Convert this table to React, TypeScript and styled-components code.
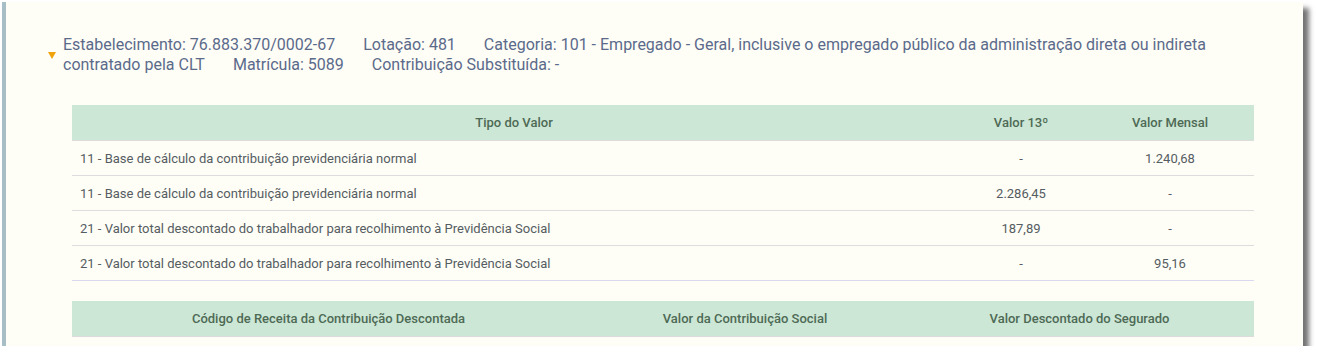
import React from "react";
import styled, { createGlobalStyle } from "styled-components";

const GlobalStyle = createGlobalStyle`
  body {
    margin: 0;
    background: #ffffff;
    font-family: Roboto, "Liberation Sans", sans-serif;
  }
`;

const Card = styled.div`
  box-sizing: border-box;
  margin: 2px 0 0 2px;
  width: 1301px;
  background: #fefef6;
  border-left: 4px solid #a8bec6;
  box-shadow: 6px 6px 5px rgba(0, 0, 0, 0.55);
  padding: 33px 49px 9px 0;
`;

const Summary = styled.div`
  display: flex;
  align-items: center;
  gap: 7px;
  padding-left: 42px;
  padding-right: 10px;
`;

const Caret = styled.span`
  flex: none;
  width: 0;
  height: 0;
  border-left: 4.5px solid transparent;
  border-right: 4.5px solid transparent;
  border-top: 7px solid #f0a30a;
`;

const Info = styled.div`
  font-size: 16px;
  line-height: 20px;
  color: #5b6a8b;
`;

const Field = styled.span`
  margin-right: 28px;
`;

const Table = styled.table<{ $top: number }>`
  border-collapse: collapse;
  width: 1182px;
  margin: ${(p) => p.$top}px 0 0 66px;
  table-layout: fixed;
  font-size: 13px;
`;

const Th = styled.th`
  background: #cce7d6;
  color: #4e6a55;
  font-weight: 500;
  height: 35px;
  padding: 0 8px;
  text-align: center;
  border-bottom: 1px solid #dcdcdc;
`;

const Td = styled.td<{ $center?: boolean; $last?: boolean }>`
  height: 34px;
  padding: 0 8px;
  color: #555c62;
  text-align: ${(p) => (p.$center ? "center" : "left")};
  border-bottom: 1px solid ${(p) => (p.$last ? "#d8d8ee" : "#dddddd")};
`;

const rows = [
  { tipo: "11 - Base de cálculo da contribuição previdenciária normal", v13: "-", mensal: "1.240,68" },
  { tipo: "11 - Base de cálculo da contribuição previdenciária normal", v13: "2.286,45", mensal: "-" },
  { tipo: "21 - Valor total descontado do trabalhador para recolhimento à Previdência Social", v13: "187,89", mensal: "-" },
  { tipo: "21 - Valor total descontado do trabalhador para recolhimento à Previdência Social", v13: "-", mensal: "95,16" },
];

export default function App() {
  return (
    <>
      <GlobalStyle />
      <Card>
        <Summary>
          <Caret />
          <Info>
            <Field>Estabelecimento: 76.883.370/0002-67</Field>
            <Field>Lotação: 481</Field>
            <Field>
              Categoria: 101 - Empregado - Geral, inclusive o empregado público da administração direta ou indireta
              contratado pela CLT
            </Field>
            <Field>Matrícula: 5089</Field>
            <span>Contribuição Substituída: -</span>
          </Info>
        </Summary>

        <Table $top={30}>
          <colgroup>
            <col style={{ width: 884 }} />
            <col style={{ width: 130 }} />
            <col style={{ width: 168 }} />
          </colgroup>
          <thead>
            <tr>
              <Th>Tipo do Valor</Th>
              <Th>Valor 13º</Th>
              <Th>Valor Mensal</Th>
            </tr>
          </thead>
          <tbody>
            {rows.map((r, i) => (
              <tr key={i}>
                <Td $last={i === rows.length - 1}>{r.tipo}</Td>
                <Td $center $last={i === rows.length - 1}>{r.v13}</Td>
                <Td $center $last={i === rows.length - 1}>{r.mensal}</Td>
              </tr>
            ))}
          </tbody>
        </Table>

        <Table $top={20}>
          <colgroup>
            <col style={{ width: 513 }} />
            <col style={{ width: 320 }} />
            <col style={{ width: 349 }} />
          </colgroup>
          <thead>
            <tr>
              <Th>Código de Receita da Contribuição Descontada</Th>
              <Th>Valor da Contribuição Social</Th>
              <Th>Valor Descontado do Segurado</Th>
            </tr>
          </thead>
        </Table>
      </Card>
    </>
  );
}
